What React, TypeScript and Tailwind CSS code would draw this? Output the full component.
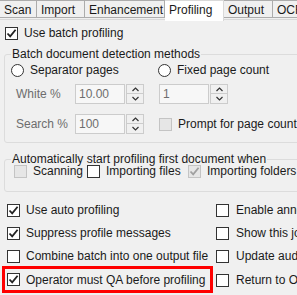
import React from 'react';

const FONT = { fontFamily: '"Liberation Sans", Arial, sans-serif' };

function Box({ checked, disabled }: { checked?: boolean; disabled?: boolean }) {
  return (
    <span
      className={`relative inline-flex w-[13px] h-[13px] shrink-0 border items-center justify-center ${
        disabled ? 'border-[#c4c4c4] bg-[#e6e6e6]' : 'border-[#333333] bg-white'
      }`}
    >
      {checked && (
        <svg width="11" height="11" viewBox="0 0 11 11">
          <path d="M1.5 5.5 L4.2 8.4 L9.6 1.8" fill="none" stroke={disabled ? '#a0a0a0' : '#222'} strokeWidth="1.8" />
        </svg>
      )}
    </span>
  );
}

function Check({ label, checked, disabled, className = '' }: { label: string; checked?: boolean; disabled?: boolean; className?: string }) {
  return (
    <div className={`flex items-center gap-[6px] whitespace-nowrap ${className}`}>
      <Box checked={checked} disabled={disabled} />
      <span className="text-[12px] leading-[16px] text-[#1a1a1a]">{label}</span>
    </div>
  );
}

function Radio({ label, className = '' }: { label: string; className?: string }) {
  return (
    <div className={`flex items-center gap-[6px] whitespace-nowrap ${className}`}>
      <span className="w-[13px] h-[13px] rounded-full border border-[#333333] bg-white shrink-0" />
      <span className="text-[12px] leading-[16px] text-[#1a1a1a]">{label}</span>
    </div>
  );
}

function Spin({ value, w }: { value: string; w: string }) {
  return (
    <div className="flex">
      <div className={`${w} h-[20px] border border-[#cccccc] bg-[#f7f7f7] text-[12px] leading-[18px] pl-[3px] text-[#6d6d6d]`}>{value}</div>
      <div className="flex flex-col w-[18px] h-[20px] ml-[1px]">
        <div className="h-[10px] border border-[#cccccc] bg-[#f0f0f0] flex items-center justify-center">
          <svg width="7" height="5" viewBox="0 0 7 5"><path d="M0.5 4 L3.5 1 L6.5 4" fill="none" stroke="#333" strokeWidth="1.2" /></svg>
        </div>
        <div className="h-[10px] border border-t-0 border-[#cccccc] bg-[#f0f0f0] flex items-center justify-center">
          <svg width="7" height="5" viewBox="0 0 7 5"><path d="M0.5 1 L3.5 4 L6.5 1" fill="none" stroke="#333" strokeWidth="1.2" /></svg>
        </div>
      </div>
    </div>
  );
}

const tabs = [
  { label: 'Scan', w: 'w-[37px]' },
  { label: 'Import', w: 'w-[48px]' },
  { label: 'Enhancement', w: 'w-[80px]' },
  { label: 'Profiling', w: 'w-[59px]', active: true },
  { label: 'Output', w: 'w-[49px]' },
  { label: 'OCR', w: 'w-[40px]' },
];

export default function App() {
  return (
    <div className="w-[297px] h-[295px] overflow-hidden bg-[#f0f0f0] text-[#1a1a1a]" style={FONT}>
      {/* Tabs */}
      <div className="flex h-[20px] border-b border-[#d9d9d9] bg-[#f0f0f0] whitespace-nowrap">
        {tabs.map((t) => (
          <div
            key={t.label}
            className={`${t.w} shrink-0 text-[12px] leading-[16px] pl-[4px] border border-l-0 ${
              t.active
                ? 'h-[21px] bg-white border-[#d9d9d9] border-b-0 pt-[1px]'
                : 'h-[18px] bg-[#f0f0f0] border-[#acacac] pt-[1px]'
            }`}
          >
            {t.label}
          </div>
        ))}
      </div>

      <div className="bg-[#f0f0f0] pt-[6px]">
        <Check label="Use batch profiling" checked className="ml-[5px] h-[14px]" />

        <fieldset className="ml-[4px] mt-[6px] w-[320px] h-[97px] border border-[#dcdcdc] rounded-[3px]">
          <legend className="ml-[6px] px-[1px] text-[12px] leading-[16px] whitespace-nowrap">Batch document detection methods</legend>
          <div className="flex mt-[1px] h-[14px]">
            <Radio label="Separator pages" className="ml-[6px] w-[147px]" />
            <Radio label="Fixed page count" />
          </div>
          <div className="flex mt-[7px] items-center">
            <span className="ml-[11px] w-[59px] text-[12px] text-[#6d6d6d]">White %</span>
            <Spin value="10.00" w="w-[50px]" />
            <div className="ml-[15px]"><Spin value="1" w="w-[50px]" /></div>
          </div>
          <div className="flex mt-[10px] items-center">
            <span className="ml-[11px] w-[59px] text-[12px] text-[#6d6d6d]">Search %</span>
            <Spin value="100" w="w-[50px]" />
            <Check label="Prompt for page count" disabled className="ml-[15px]" />
          </div>
        </fieldset>

        <fieldset className="ml-[4px] mt-[8px] w-[320px] h-[41px] border border-[#dcdcdc] rounded-[3px]">
          <legend className="ml-[6px] px-[1px] text-[12px] leading-[16px] whitespace-nowrap">Automatically start profiling first document when</legend>
          <div className="flex items-center -mt-[4px]">
            <Check label="Scanning" disabled className="ml-[9px] w-[73px]" />
            <Check label="Importing files" className="w-[101px]" />
            <Check label="Importing folders" checked disabled className="gap-[5px]" />
          </div>
        </fieldset>

        <div className="flex mt-[10px]">
          <div className="w-[210px] shrink-0 flex flex-col">
            <Check label="Use auto profiling" checked className="ml-[7px] h-[16px]" />
            <Check label="Suppress profile messages" checked className="ml-[7px] h-[16px] mt-[7px]" />
            <Check label="Combine batch into one output file" className="ml-[7px] h-[16px] mt-[7px]" />
            <div className="ml-[2px] mt-[2px] h-[27px] w-[211px] border-[3px] border-[#ff0000] flex items-center">
              <Check label="Operator must QA before profiling" checked className="ml-[2px]" />
            </div>
          </div>
          <div className="flex flex-col ml-[6px]">
            <Check label="Enable annotations" className="h-[16px] gap-[7px]" />
            <Check label="Show this job" className="h-[16px] mt-[7px] gap-[7px]" />
            <Check label="Update audit" className="h-[16px] mt-[7px] gap-[7px]" />
            <Check label="Return to OCR" className="h-[16px] mt-[8px] gap-[7px]" />
          </div>
        </div>
      </div>
    </div>
  );
}
